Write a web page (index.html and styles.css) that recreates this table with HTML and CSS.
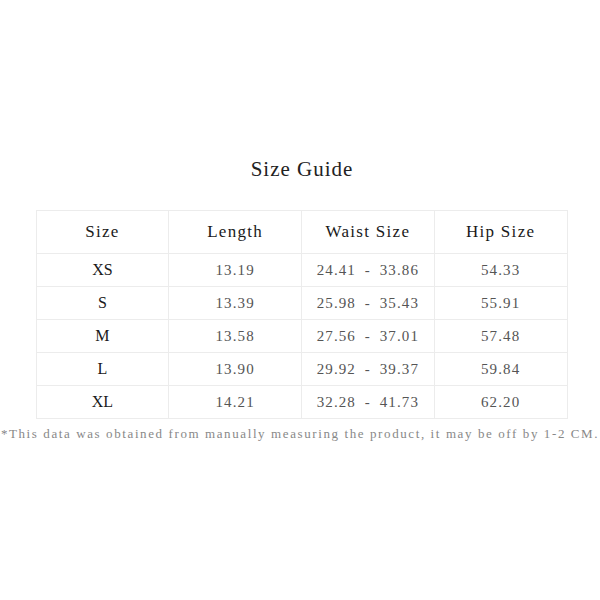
FILE: index.html
```html
<!DOCTYPE html>
<html>
<head>
<meta charset="utf-8">
<link rel="stylesheet" href="styles.css">
</head>
<body>
<div class="page">
  <h1 class="title">Size Guide</h1>
  <table class="guide">
    <thead>
      <tr><th>Size</th><th>Length</th><th>Waist Size</th><th>Hip Size</th></tr>
    </thead>
    <tbody>
      <tr><td class="sz">XS</td><td>13.19</td><td>24.41 - 33.86</td><td>54.33</td></tr>
      <tr><td class="sz">S</td><td>13.39</td><td>25.98 - 35.43</td><td>55.91</td></tr>
      <tr><td class="sz">M</td><td>13.58</td><td>27.56 - 37.01</td><td>57.48</td></tr>
      <tr><td class="sz">L</td><td>13.90</td><td>29.92 - 39.37</td><td>59.84</td></tr>
      <tr><td class="sz">XL</td><td>14.21</td><td>32.28 - 41.73</td><td>62.20</td></tr>
    </tbody>
  </table>
  <p class="note">*This data was obtained from manually measuring the product, it may be off by 1-2 CM.</p>
</div>
</body>
</html>
```
FILE: styles.css
```css
html, body {
  margin: 0;
  padding: 0;
  background: #fff;
}
body {
  font-family: "Liberation Serif", "DejaVu Serif", serif;
  width: 600px;
  height: 600px;
  overflow: hidden;
}
.page {
  padding-top: 155px;
  display: flex;
  flex-direction: column;
  align-items: center;
}
.title {
  margin: 0;
  font-size: 21px;
  letter-spacing: 1px;
  font-weight: normal;
  color: #222;
  line-height: 28px;
  padding-left: 4px;
}
.guide {
  margin-top: 27px;
  margin-left: 3px;
  width: 532px;
  border-collapse: collapse;
  table-layout: fixed;
  border: 1px solid #f0f0f0;
}
.guide th, .guide td {
  border: 1px solid #ececec;
  text-align: center;
  padding: 0;
}
.guide th {
  height: 42px;
  font-size: 17px;
  letter-spacing: 1.3px;
  font-weight: normal;
  color: #1a1a1a;
}
.guide td {
  height: 32px;
  font-size: 15px;
  letter-spacing: 1.1px;
  word-spacing: 4px;
  color: #555;
}
.guide td.sz {
  color: #1a1a1a;
  font-size: 16px;
  letter-spacing: 0;
}
.note {
  margin: 6px 0 0;
  white-space: nowrap;
  font-size: 13px;
  letter-spacing: 1.6px;
  color: #888;
  line-height: 18px;
}
```
